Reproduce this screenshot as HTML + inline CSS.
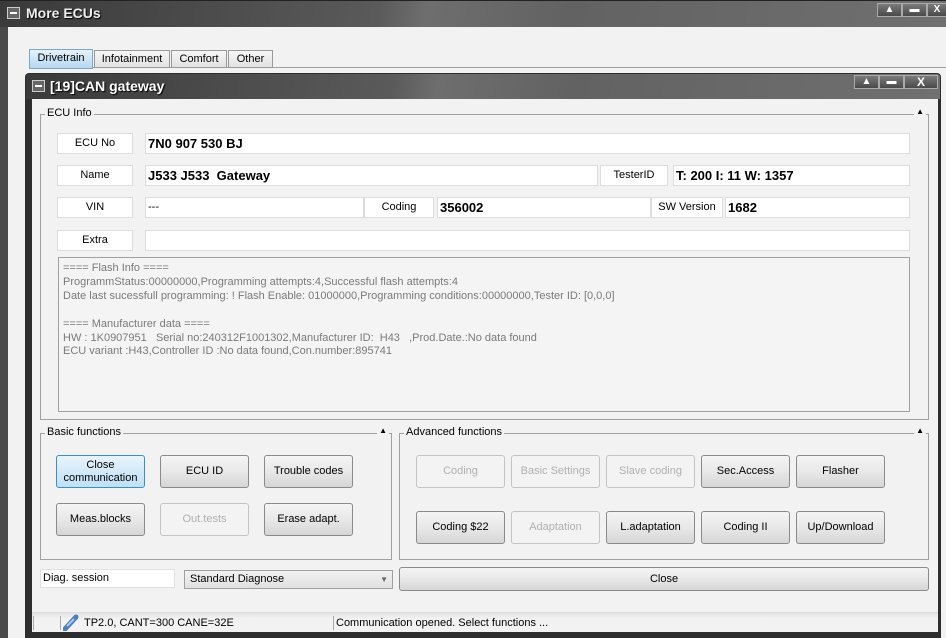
<!DOCTYPE html>
<html><head><meta charset="utf-8"><style>
*{box-sizing:border-box;margin:0;padding:0}
body{width:946px;height:638px;overflow:hidden;background:#4a4a4a;font-family:"Liberation Sans",Arial,sans-serif;font-size:11px;color:#000;position:relative}
.a{position:absolute}
.tb{background:linear-gradient(100deg,#3a3a3a 0%,#5a5a5a 40%,#6e6e6e 45%,#626262 60%,#707070 100%);}
.wb{position:absolute;top:0;height:14px;border:1px solid #aaa;background:linear-gradient(#7a7a7a,#4a4a4a);color:#fff;font-size:10px;font-weight:bold;text-align:center;line-height:12px}
.box{position:absolute;background:#fff;border:1px solid #dcdcdc;height:21px;line-height:19px}
.lbl{text-align:center;font-size:11px}
.val{font-weight:bold;font-size:13px;padding-left:2px}
.grp{position:absolute;border:1px solid #a0a0a0}
.gt{position:absolute;top:-8px;left:4px;background:#f2f2f2;padding:0 2px;font-size:11px}
.ga{position:absolute;top:-8px;right:2px;background:#f2f2f2;padding:0 2px;font-size:8px}
.btn{position:absolute;width:89px;height:33px;border:1px solid #8a8a8a;border-radius:3px;background:linear-gradient(#f4f4f4 0%,#e8e8e8 50%,#d6d6d6 100%);text-align:center;font-size:11px;display:flex;align-items:center;justify-content:center;line-height:13px}
.dis{color:#b0b0b0;border-color:#c4c4c4;background:#f3f3f3}
</style></head><body>
<div class="a tb" style="left:0;top:0;width:946px;height:27px;border-top:1px solid #222"></div>
<div class="a" style="left:7px;top:7px;width:13px;height:12px;background:#666;border:1px solid #ccc"><div class="a" style="left:2px;top:4px;width:7px;height:2px;background:#fff"></div></div>
<div class="a" style="left:26px;top:5px;color:#eee;font-size:14px;font-weight:bold;text-shadow:1px 1px 1px #000">More ECUs</div>
<div class="wb" style="left:877px;top:3px;width:25px">▲</div>
<div class="wb" style="left:902px;top:3px;width:25px">▬</div>
<div class="wb" style="left:927px;top:3px;width:20px">X</div>
<div class="a" style="left:8px;top:27px;width:938px;height:611px;background:#f2f2f2"></div>
<div class="a" style="left:93px;top:67px;width:853px;height:1px;background:#a0a0a0"></div>
<div class="a" style="left:29px;top:49px;width:64px;height:20px;border:1px solid #7aa8cc;background:linear-gradient(#e6f2fb,#b5d8f0);text-align:center;line-height:17px;font-size:11px">Drivetrain</div>
<div class="a" style="left:94px;top:50px;width:76px;height:18px;border:1px solid #999;background:linear-gradient(#f6f6f6,#e2e2e2);text-align:center;line-height:16px">Infotainment</div>
<div class="a" style="left:171px;top:50px;width:56px;height:18px;border:1px solid #999;background:linear-gradient(#f6f6f6,#e2e2e2);text-align:center;line-height:16px">Comfort</div>
<div class="a" style="left:228px;top:50px;width:45px;height:18px;border:1px solid #999;background:linear-gradient(#f6f6f6,#e2e2e2);text-align:center;line-height:16px">Other</div>

<div class="a" style="left:25px;top:73px;width:916px;height:565px;background:#2e2e2e;border-radius:4px 4px 0 0"></div>
<div class="a tb" style="left:26px;top:74px;width:914px;height:25px;border-radius:3px 3px 0 0"></div>
<div class="a" style="left:32px;top:80px;width:13px;height:12px;background:#666;border:1px solid #ccc"><div class="a" style="left:2px;top:4px;width:7px;height:2px;background:#fff"></div></div>
<div class="a" style="left:50px;top:78px;color:#fff;font-size:14px;font-weight:bold;text-shadow:1px 1px 1px #000">[19]CAN gateway</div>
<div class="wb" style="left:854px;top:75px;width:25px">▲</div>
<div class="wb" style="left:879px;top:75px;width:25px">▬</div>
<div class="wb" style="left:904px;top:75px;width:34px;font-size:12px">X</div>
<div class="a" style="left:32px;top:99px;width:906px;height:533px;background:#f2f2f2"></div>

<div class="grp" style="left:40px;top:114px;width:889px;height:306px"><div class="gt">ECU Info</div><div class="ga">▲</div></div>
<div class="box lbl" style="left:57px;top:133px;width:76px">ECU No</div>
<div class="box val" style="left:145px;top:133px;width:765px">7N0 907 530 BJ</div>
<div class="box lbl" style="left:57px;top:165px;width:76px">Name</div>
<div class="box val" style="left:145px;top:165px;width:453px">J533 J533&nbsp; Gateway</div>
<div class="box lbl" style="left:600px;top:165px;width:68px">TesterID</div>
<div class="box val" style="left:673px;top:165px;width:237px">T: 200 I: 11 W: 1357</div>
<div class="box lbl" style="left:57px;top:197px;width:76px">VIN</div>
<div class="box" style="left:145px;top:197px;width:219px;padding-left:2px">---</div>
<div class="box lbl" style="left:364px;top:197px;width:70px">Coding</div>
<div class="box val" style="left:437px;top:197px;width:214px">356002</div>
<div class="box lbl" style="left:651px;top:197px;width:72px">SW Version</div>
<div class="box val" style="left:725px;top:197px;width:185px">1682</div>
<div class="box lbl" style="left:57px;top:230px;width:76px">Extra</div>
<div class="box" style="left:145px;top:230px;width:765px"></div>
<div class="a" style="left:58px;top:257px;width:852px;height:155px;border:1px solid #a0a0a0;background:#f4f4f4;color:#7a7a7a;font-size:11px;line-height:13.9px;padding:4px 0 0 4px;white-space:pre">==== Flash Info ====
ProgrammStatus:00000000,Programming attempts:4,Successful flash attempts:4
Date last sucessfull programming: ! Flash Enable: 01000000,Programming conditions:00000000,Tester ID: [0,0,0]

==== Manufacturer data ====
HW : 1K0907951   Serial no:240312F1001302,Manufacturer ID:  H43   ,Prod.Date.:No data found
ECU variant :H43,Controller ID :No data found,Con.number:895741</div>

<div class="grp" style="left:40px;top:433px;width:352px;height:127px"><div class="gt">Basic functions</div><div class="ga">▲</div></div>
<div class="btn" style="left:56px;top:455px;border-color:#3c8fc4;background:linear-gradient(#e8f4fc,#bfe0f5)">Close<br>communication</div>
<div class="btn" style="left:160px;top:455px">ECU ID</div>
<div class="btn" style="left:264px;top:455px">Trouble codes</div>
<div class="btn" style="left:56px;top:503px">Meas.blocks</div>
<div class="btn dis" style="left:160px;top:503px">Out.tests</div>
<div class="btn" style="left:264px;top:503px">Erase adapt.</div>

<div class="grp" style="left:399px;top:433px;width:530px;height:127px"><div class="gt">Advanced functions</div><div class="ga">▲</div></div>
<div class="btn dis" style="left:416px;top:455px">Coding</div>
<div class="btn dis" style="left:511px;top:455px">Basic Settings</div>
<div class="btn dis" style="left:606px;top:455px">Slave coding</div>
<div class="btn" style="left:701px;top:455px">Sec.Access</div>
<div class="btn" style="left:796px;top:455px">Flasher</div>
<div class="btn" style="left:416px;top:511px">Coding $22</div>
<div class="btn dis" style="left:511px;top:511px">Adaptation</div>
<div class="btn" style="left:606px;top:511px">L.adaptation</div>
<div class="btn" style="left:701px;top:511px">Coding II</div>
<div class="btn" style="left:796px;top:511px">Up/Download</div>

<div class="a" style="left:40px;top:569px;width:135px;height:19px;background:#fff;border:1px solid #e0e0e0;padding-left:2px;line-height:17px">Diag. session</div>
<div class="a" style="left:184px;top:570px;width:209px;height:19px;border:1px solid #a0a0a0;background:linear-gradient(#f2f2f2,#e0e0e0);padding-left:5px;line-height:17px">Standard Diagnose<span class="a" style="right:4px;top:0;font-size:8px;color:#666">▼</span></div>
<div class="btn" style="left:399px;top:567px;width:530px;height:24px">Close</div>

<div class="a" style="left:32px;top:612px;width:906px;height:20px;background:linear-gradient(#e4e4e4,#f2f2f2 30%);border-top:1px solid #ddd"></div>
<div class="a" style="left:33px;top:616px;width:1px;height:14px;background:#aaa"></div>
<div class="a" style="left:60px;top:616px;width:1px;height:14px;background:#aaa"></div>
<svg class="a" style="left:63px;top:614px" width="16" height="17"><path d="M2 15 L13 3" stroke="#4a7fc0" stroke-width="5" stroke-linecap="round"/><path d="M4 12 L11 5" stroke="#a8c8f0" stroke-width="2"/></svg>
<div class="a" style="left:84px;top:617px">TP2.0, CANT=300 CANE=32E</div>
<div class="a" style="left:333px;top:616px;width:1px;height:14px;background:#aaa"></div>
<div class="a" style="left:336px;top:617px">Communication opened. Select functions ...</div>
</body></html>
